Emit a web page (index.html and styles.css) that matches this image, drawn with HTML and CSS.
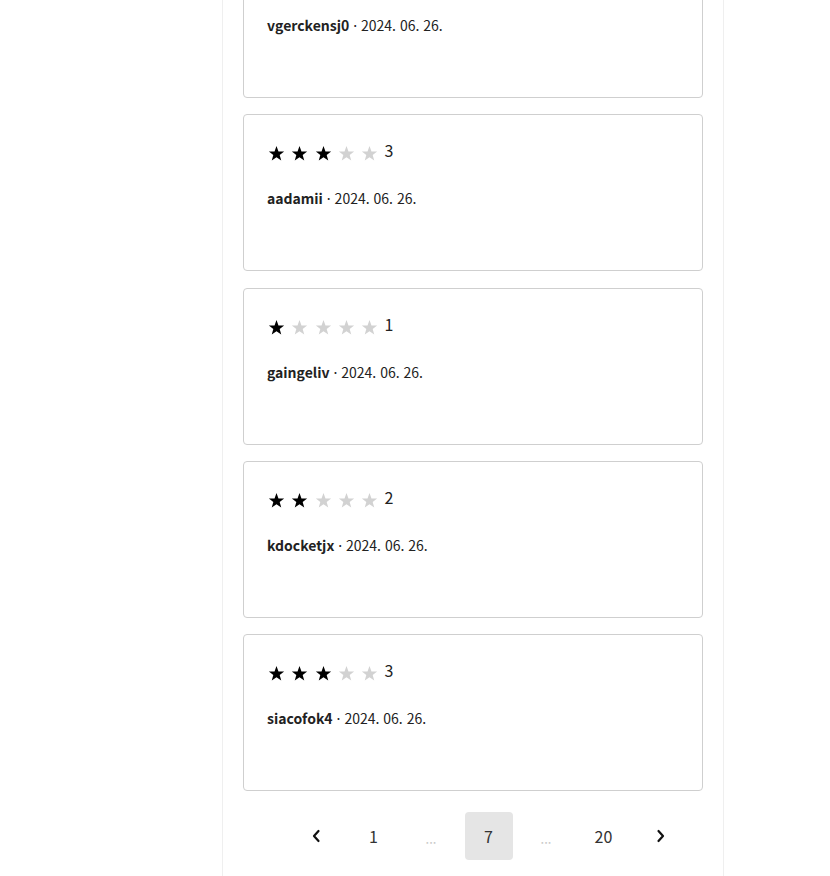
FILE: index.html
```html
<!DOCTYPE html>
<html lang="ko">
<head>
<meta charset="utf-8">
<link rel="stylesheet" href="styles.css">
</head>
<body>
<div class="container">
  <div class="list">
    <div class="card">
      <div class="stars">
        <svg class="star on" viewBox="0 0 24 24"><polygon points="12,1.5 14.8,9 22.8,9.2 16.5,14.1 18.7,21.8 12,17.3 5.3,21.8 7.5,14.1 1.2,9.2 9.2,9"/></svg><svg class="star on" viewBox="0 0 24 24"><polygon points="12,1.5 14.8,9 22.8,9.2 16.5,14.1 18.7,21.8 12,17.3 5.3,21.8 7.5,14.1 1.2,9.2 9.2,9"/></svg><svg class="star on" viewBox="0 0 24 24"><polygon points="12,1.5 14.8,9 22.8,9.2 16.5,14.1 18.7,21.8 12,17.3 5.3,21.8 7.5,14.1 1.2,9.2 9.2,9"/></svg><svg class="star" viewBox="0 0 24 24"><polygon points="12,1.5 14.8,9 22.8,9.2 16.5,14.1 18.7,21.8 12,17.3 5.3,21.8 7.5,14.1 1.2,9.2 9.2,9"/></svg><svg class="star" viewBox="0 0 24 24"><polygon points="12,1.5 14.8,9 22.8,9.2 16.5,14.1 18.7,21.8 12,17.3 5.3,21.8 7.5,14.1 1.2,9.2 9.2,9"/></svg>
      </div>
      <div class="meta"><b class="user">vgerckensj0</b> · 2024. 06. 26.</div>
    </div>
    <div class="card">
      <div class="stars">
        <svg class="star on" viewBox="0 0 24 24"><polygon points="12,1.5 14.8,9 22.8,9.2 16.5,14.1 18.7,21.8 12,17.3 5.3,21.8 7.5,14.1 1.2,9.2 9.2,9"/></svg><svg class="star on" viewBox="0 0 24 24"><polygon points="12,1.5 14.8,9 22.8,9.2 16.5,14.1 18.7,21.8 12,17.3 5.3,21.8 7.5,14.1 1.2,9.2 9.2,9"/></svg><svg class="star on" viewBox="0 0 24 24"><polygon points="12,1.5 14.8,9 22.8,9.2 16.5,14.1 18.7,21.8 12,17.3 5.3,21.8 7.5,14.1 1.2,9.2 9.2,9"/></svg><svg class="star" viewBox="0 0 24 24"><polygon points="12,1.5 14.8,9 22.8,9.2 16.5,14.1 18.7,21.8 12,17.3 5.3,21.8 7.5,14.1 1.2,9.2 9.2,9"/></svg><svg class="star" viewBox="0 0 24 24"><polygon points="12,1.5 14.8,9 22.8,9.2 16.5,14.1 18.7,21.8 12,17.3 5.3,21.8 7.5,14.1 1.2,9.2 9.2,9"/></svg><span class="score">3</span>
      </div>
      <div class="meta"><b class="user">aadamii</b> · 2024. 06. 26.</div>
    </div>
    <div class="card">
      <div class="stars">
        <svg class="star on" viewBox="0 0 24 24"><polygon points="12,1.5 14.8,9 22.8,9.2 16.5,14.1 18.7,21.8 12,17.3 5.3,21.8 7.5,14.1 1.2,9.2 9.2,9"/></svg><svg class="star" viewBox="0 0 24 24"><polygon points="12,1.5 14.8,9 22.8,9.2 16.5,14.1 18.7,21.8 12,17.3 5.3,21.8 7.5,14.1 1.2,9.2 9.2,9"/></svg><svg class="star" viewBox="0 0 24 24"><polygon points="12,1.5 14.8,9 22.8,9.2 16.5,14.1 18.7,21.8 12,17.3 5.3,21.8 7.5,14.1 1.2,9.2 9.2,9"/></svg><svg class="star" viewBox="0 0 24 24"><polygon points="12,1.5 14.8,9 22.8,9.2 16.5,14.1 18.7,21.8 12,17.3 5.3,21.8 7.5,14.1 1.2,9.2 9.2,9"/></svg><svg class="star" viewBox="0 0 24 24"><polygon points="12,1.5 14.8,9 22.8,9.2 16.5,14.1 18.7,21.8 12,17.3 5.3,21.8 7.5,14.1 1.2,9.2 9.2,9"/></svg><span class="score">1</span>
      </div>
      <div class="meta"><b class="user">gaingeliv</b> · 2024. 06. 26.</div>
    </div>
    <div class="card">
      <div class="stars">
        <svg class="star on" viewBox="0 0 24 24"><polygon points="12,1.5 14.8,9 22.8,9.2 16.5,14.1 18.7,21.8 12,17.3 5.3,21.8 7.5,14.1 1.2,9.2 9.2,9"/></svg><svg class="star on" viewBox="0 0 24 24"><polygon points="12,1.5 14.8,9 22.8,9.2 16.5,14.1 18.7,21.8 12,17.3 5.3,21.8 7.5,14.1 1.2,9.2 9.2,9"/></svg><svg class="star" viewBox="0 0 24 24"><polygon points="12,1.5 14.8,9 22.8,9.2 16.5,14.1 18.7,21.8 12,17.3 5.3,21.8 7.5,14.1 1.2,9.2 9.2,9"/></svg><svg class="star" viewBox="0 0 24 24"><polygon points="12,1.5 14.8,9 22.8,9.2 16.5,14.1 18.7,21.8 12,17.3 5.3,21.8 7.5,14.1 1.2,9.2 9.2,9"/></svg><svg class="star" viewBox="0 0 24 24"><polygon points="12,1.5 14.8,9 22.8,9.2 16.5,14.1 18.7,21.8 12,17.3 5.3,21.8 7.5,14.1 1.2,9.2 9.2,9"/></svg><span class="score">2</span>
      </div>
      <div class="meta"><b class="user">kdocketjx</b> · 2024. 06. 26.</div>
    </div>
    <div class="card">
      <div class="stars">
        <svg class="star on" viewBox="0 0 24 24"><polygon points="12,1.5 14.8,9 22.8,9.2 16.5,14.1 18.7,21.8 12,17.3 5.3,21.8 7.5,14.1 1.2,9.2 9.2,9"/></svg><svg class="star on" viewBox="0 0 24 24"><polygon points="12,1.5 14.8,9 22.8,9.2 16.5,14.1 18.7,21.8 12,17.3 5.3,21.8 7.5,14.1 1.2,9.2 9.2,9"/></svg><svg class="star on" viewBox="0 0 24 24"><polygon points="12,1.5 14.8,9 22.8,9.2 16.5,14.1 18.7,21.8 12,17.3 5.3,21.8 7.5,14.1 1.2,9.2 9.2,9"/></svg><svg class="star" viewBox="0 0 24 24"><polygon points="12,1.5 14.8,9 22.8,9.2 16.5,14.1 18.7,21.8 12,17.3 5.3,21.8 7.5,14.1 1.2,9.2 9.2,9"/></svg><svg class="star" viewBox="0 0 24 24"><polygon points="12,1.5 14.8,9 22.8,9.2 16.5,14.1 18.7,21.8 12,17.3 5.3,21.8 7.5,14.1 1.2,9.2 9.2,9"/></svg><span class="score">3</span>
      </div>
      <div class="meta"><b class="user">siacofok4</b> · 2024. 06. 26.</div>
    </div>
  </div>
  <nav class="pager">
    <span class="pg arrow"><svg viewBox="0 0 10 14" width="10" height="14"><path d="M7.5 2 L3 7 L7.5 12" fill="none" stroke="#111" stroke-width="2.2" stroke-linecap="round" stroke-linejoin="round"/></svg></span>
    <span class="pg">1</span>
    <span class="pg dots">...</span>
    <span class="pg active">7</span>
    <span class="pg dots">...</span>
    <span class="pg">20</span>
    <span class="pg arrow"><svg viewBox="0 0 10 14" width="10" height="14"><path d="M2.5 2 L7 7 L2.5 12" fill="none" stroke="#111" stroke-width="2.2" stroke-linecap="round" stroke-linejoin="round"/></svg></span>
  </nav>
</div>
</body>
</html>
```
FILE: styles.css
```css
html, body {
  margin: 0;
  padding: 0;
  background: #fff;
}
body {
  font-family: "Noto Sans CJK KR", "Noto Sans", sans-serif;
  color: #222;
  height: 876px;
  overflow: hidden;
}
.container {
  display: flow-root;
  width: 460px;
  margin-left: 222px;
  padding: 0 20px;
  border-left: 1px solid #efefef;
  border-right: 1px solid #efefef;
  min-height: 876px;
}
.list {
  margin-top: -59px;
  display: flex;
  flex-direction: column;
  gap: 16.33px;
}
.card {
  box-sizing: border-box;
  height: 157px;
  border: 1px solid #cfcfcf;
  border-radius: 4px;
  padding: 30px 23px 0;
}
.stars {
  display: flex;
  align-items: flex-start;
  height: 20px;
  margin-left: 1px;
}
.star {
  width: 17px;
  height: 17px;
  margin-right: 6.3px;
  fill: #d2d2d2;
  flex: none;
}
.star.on {
  fill: #000;
}
.score {
  font-size: 16px;
  line-height: 16px;
  color: #222;
  margin-left: 0;
  margin-top: -3px;
}
.meta {
  margin-top: 23px;
  font-size: 14px;
  line-height: 20px;
  color: #222;
}
.user {
  font-weight: 700;
}
.pager {
  display: flex;
  align-items: center;
  margin-top: 21px;
  padding-left: 49px;
  gap: 9.5px;
}
.pg {
  width: 48px;
  height: 48px;
  display: flex;
  align-items: center;
  justify-content: center;
  font-size: 16px;
  color: #333;
  border-radius: 4px;
}
.pg.dots {
  color: #c8c8c8;
  font-size: 13px;
  padding-top: 4px;
  box-sizing: border-box;
}
.pg.active {
  background: #e5e5e5;
}
```
